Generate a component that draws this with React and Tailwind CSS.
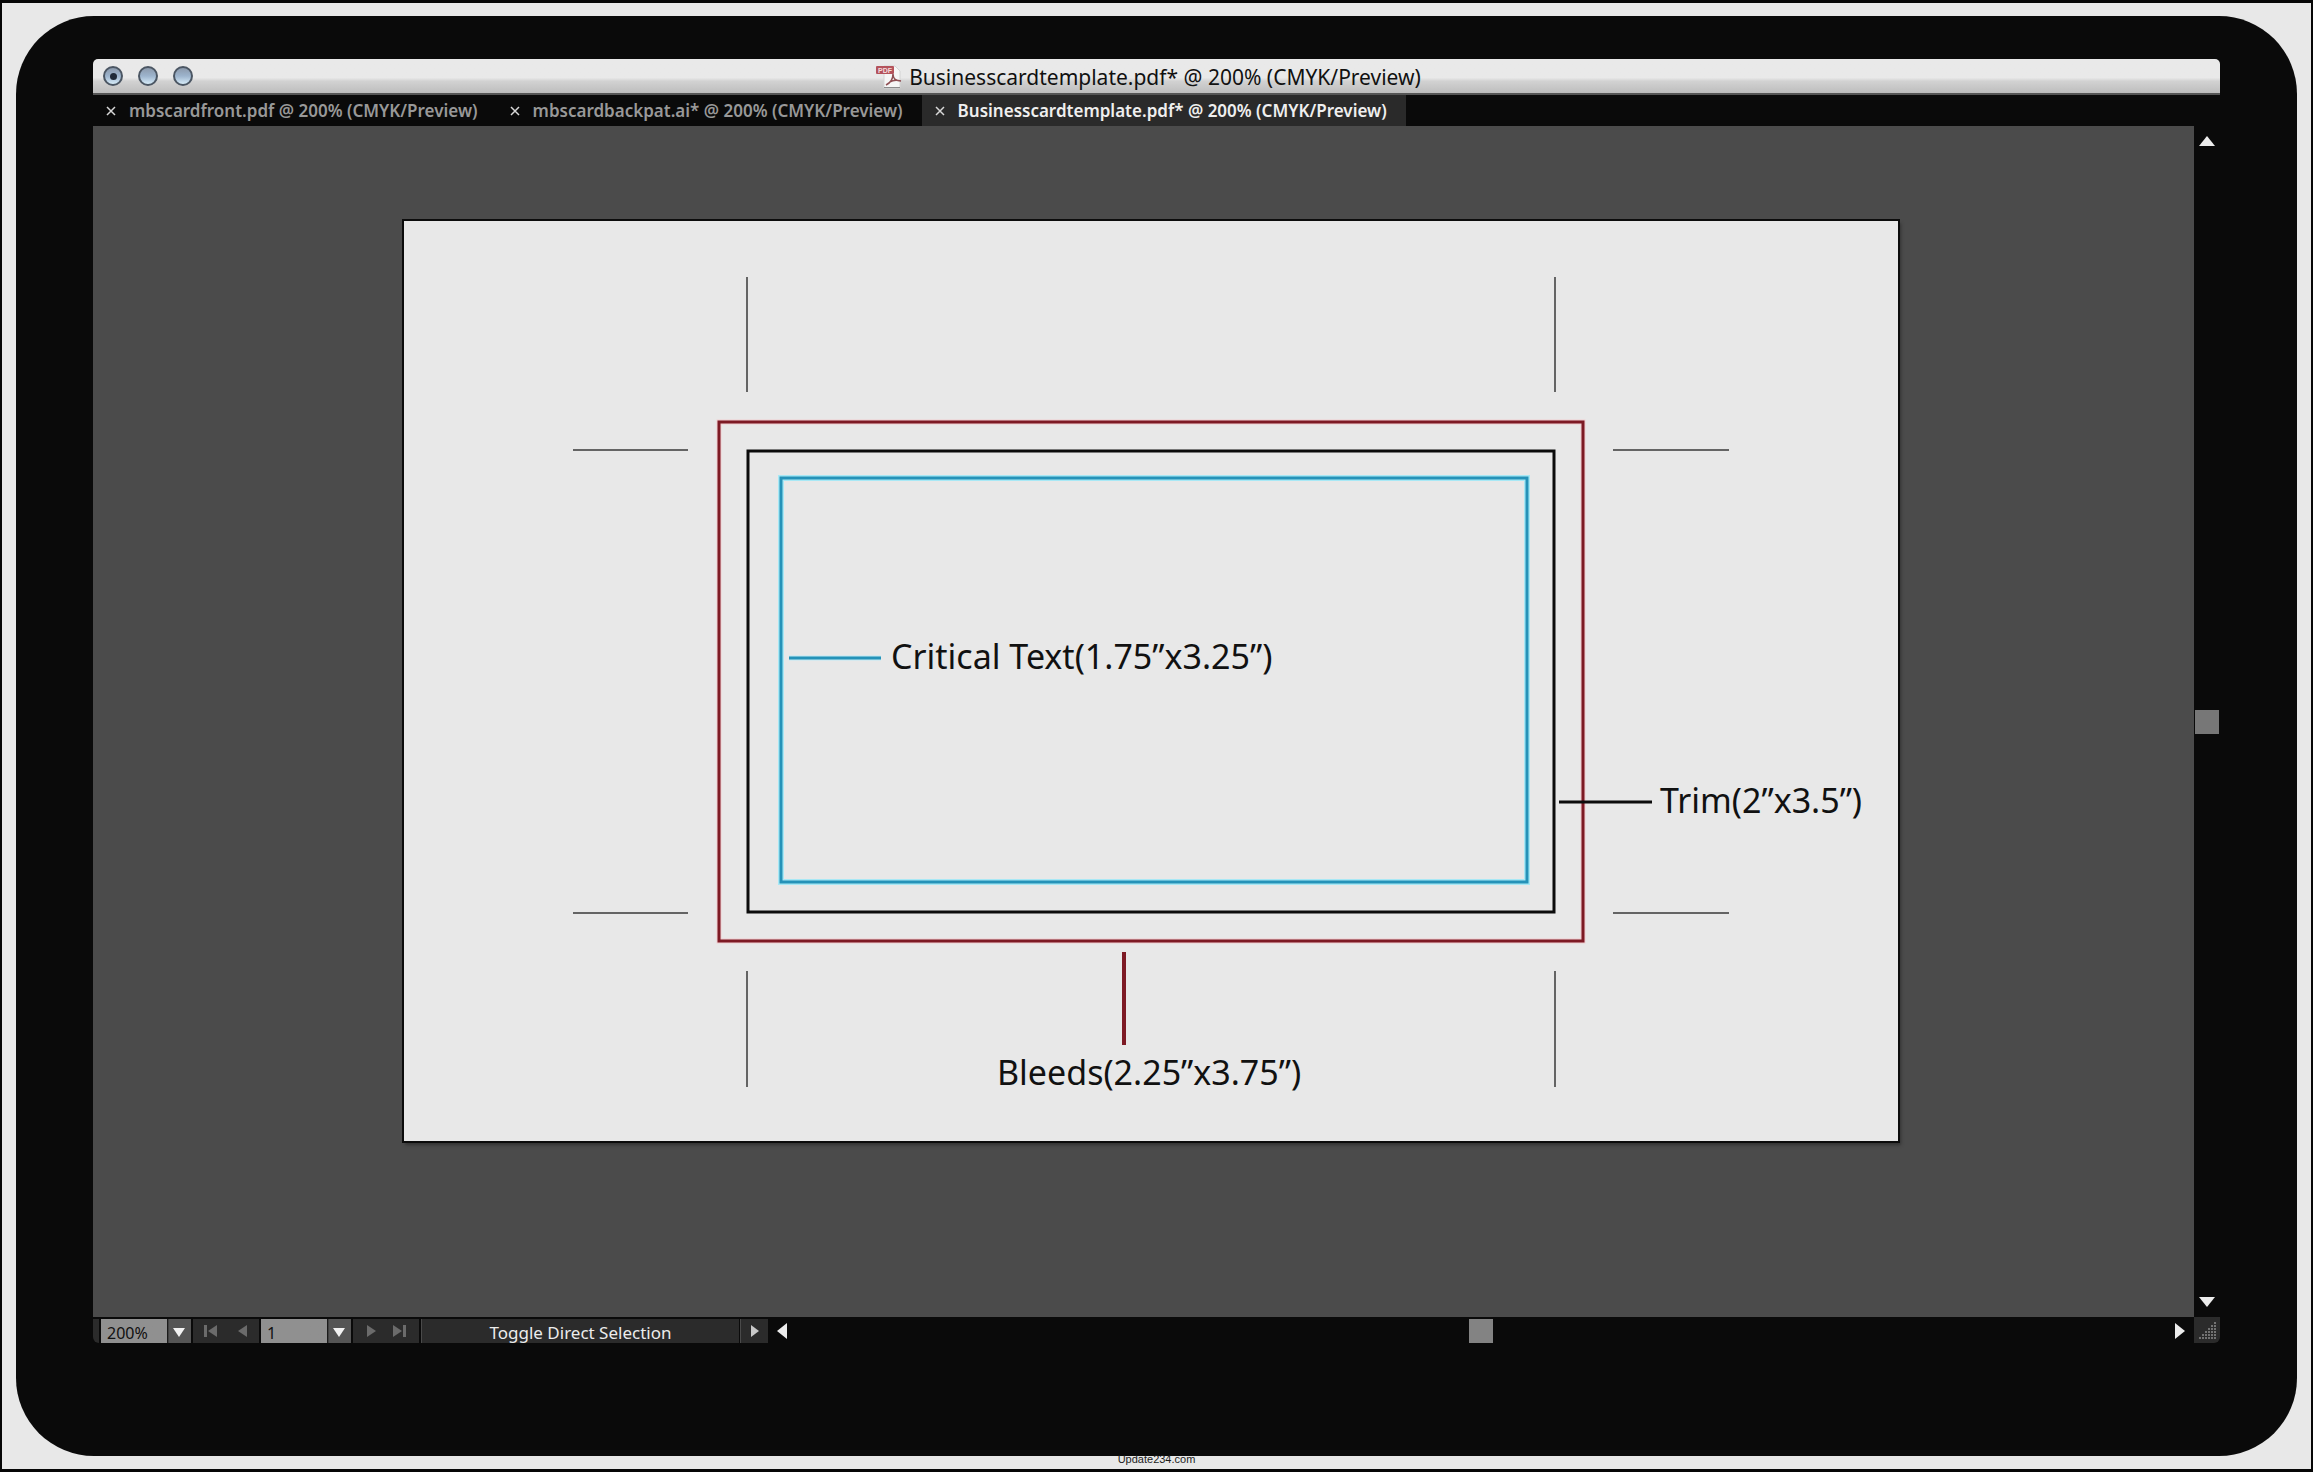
import React, { useState } from "react";

//tabs of the document window
const documents = [
  { id: "front", name: "mbscardfront.pdf @ 200% (CMYK/Preview)" },
  { id: "back", name: "mbscardbackpat.ai* @ 200% (CMYK/Preview)" },
  { id: "template", name: "Businesscardtemplate.pdf* @ 200% (CMYK/Preview)" },
];

//icons
const PdfIcon = () => (
  <svg width="26" height="24" viewBox="0 0 26 24" aria-hidden="true">
    <path d="M8 1h11l5 5v17H8z" fill="#f6f6f6" stroke="#d4d4d4" />
    <path d="M8 22.5h16" stroke="#8b8b8b" />
    <path d="M10 20c4-2 7-5 7-11c0 4 2 7 8 7M14 17c3-2 7-2 11-1" fill="none" stroke="#8f5054" strokeWidth="1.5" />
    <rect x="0" y="1" width="18" height="8" rx="1" fill="#b4535c" />
    <text x="9" y="8" fontSize="7" fontWeight="700" textAnchor="middle" fill="#f3dcdc" fontFamily="Liberation Sans, sans-serif">PDF</text>
  </svg>
);

const CloseIcon = () => (
  <svg width="10" height="10" viewBox="0 0 10 10" aria-hidden="true">
    <path d="M1 1l8 8M9 1l-8 8" stroke="#d8d8d8" strokeWidth="1.5" fill="none" />
  </svg>
);

const TriangleUp = () => (
  <svg width="16" height="10" viewBox="0 0 16 10" aria-hidden="true"><path d="M8 0l8 10H0z" fill="#ececec" /></svg>
);

const TriangleDown = () => (
  <svg width="16" height="10" viewBox="0 0 16 10" aria-hidden="true"><path d="M0 0h16l-8 10z" fill="#ececec" /></svg>
);

const TriangleLeft = () => (
  <svg width="10" height="16" viewBox="0 0 10 16" aria-hidden="true"><path d="M10 0v16L0 8z" fill="#ececec" /></svg>
);

const TriangleRight = () => (
  <svg width="10" height="16" viewBox="0 0 10 16" aria-hidden="true"><path d="M0 0v16l10-8z" fill="#ececec" /></svg>
);

const SkipIcon = ({ bar, flip }) => (
  <svg width="14" height="12" viewBox="0 0 14 12" fill="#6b6b6b" className={flip ? "-scale-x-100" : ""} aria-hidden="true">
    {bar && <path d="M0 0h3v12H0z" />}
    <path d="M13 0v12L4 6z" />
  </svg>
);

const GripIcon = () => {
  let dots = [];
  for (let row = 0; row < 6; row++) {
    for (let col = 5 - row; col < 6; col++) {
      dots.push(<rect key={row + "-" + col} x={col * 3} y={row * 3} width="2" height="2" />);
    }
  }
  return <svg width="17" height="17" viewBox="0 0 17 17" fill="#727272" aria-hidden="true">{dots}</svg>;
};

const TitleBar = ({ title }) => {
  return (
    <header className="grid h-9 grid-cols-[1fr_auto_1fr] items-center rounded-t-[5px] border-b-2 border-[#555555] bg-linear-to-b from-[#e9e9e9] from-55% via-[#d2d2d2] via-65% to-[#bdbdbd] px-[10px]">
      <div className="flex gap-[15px]">
        {["Close", "Minimize", "Zoom"].map((label, index) => (
          <button key={label} aria-label={label} className="flex size-5 items-center justify-center rounded-full border-2 border-[#4b5663] bg-linear-to-b from-[#8c9aac] via-[#9db4cd] to-[#d6ebf8]">
            {index === 0 && <span className="size-[7px] rounded-full bg-[#202a38]"></span>}
          </button>
        ))}
      </div>
      <h1 className="flex items-center gap-[7px] pt-px pr-4 text-[21px] leading-6 whitespace-nowrap text-[#111111]">
        <PdfIcon />
        {title}
      </h1>
    </header>
  );
};

const TabBar = ({ current, onSelect }) => {
  return (
    <nav className="flex h-[31px] bg-[#0a0a0a]" aria-label="Open documents">
      {documents.map((item) => (
        <div key={item.id} className={`flex items-center gap-[13px] pr-[19px] pl-[13px] ${current === item.id ? "bg-[#2a2a2a] text-[#efefef]" : "text-[#989898]"}`}>
          <button aria-label={"Close " + item.name}><CloseIcon /></button>
          <button className="text-[17px] leading-6 font-semibold whitespace-nowrap" onClick={() => onSelect(item.id)}>{item.name}</button>
        </div>
      ))}
    </nav>
  );
};

//business card template with bleed, trim and safe area
const Artboard = () => {
  return (
    <svg width="1496" height="922" viewBox="0 0 1496 922" className="shrink-0 bg-[#e8e8e8] shadow-[2px_3px_3px_#333333] outline-2 -outline-offset-1 outline-[#0c0c0c]" role="img" aria-label="Business card template">
      {/* crop marks */}
      <path d="M344 57v115M1152 57v115M344 751v116M1152 751v116M170 230h115M1210 230h116M170 693h115M1210 693h116" stroke="#383838" strokeWidth="1.5" />

      <rect x="316" y="202" width="864" height="519" fill="none" stroke="#f0cdd0" strokeWidth="5" />
      <rect x="316" y="202" width="864" height="519" fill="none" stroke="#7d1a24" strokeWidth="3" />
      <rect x="345" y="231" width="806" height="461" fill="none" stroke="#0b0b0b" strokeWidth="3" />
      <rect x="378" y="258" width="746" height="404" fill="none" stroke="#a8e8f5" strokeWidth="6" />
      <rect x="378" y="258" width="746" height="404" fill="none" stroke="#2592b8" strokeWidth="3" />

      {/* leaders */}
      <path d="M386 438h92" stroke="#bfeaf5" strokeWidth="5" />
      <path d="M386 438h92" stroke="#2592b8" strokeWidth="3" />
      <path d="M1156 582h93" stroke="#0b0b0b" strokeWidth="3" />
      <path d="M721 732v93" stroke="#7d1a24" strokeWidth="4" />

      <g fontFamily="Noto Sans, sans-serif" fontSize="34" fill="#111111">
        <text x="488" y="449">Critical Text(1.75”x3.25”)</text>
        <text x="1257" y="593">Trim(2”x3.5”)</text>
        <text x="594" y="865">Bleeds(2.25”x3.75”)</text>
      </g>
    </svg>
  );
};

const StatusSelect = ({ label, options }) => {
  return (
    <div className="relative flex border-x-2 border-[#0a0a0a]">
      <select aria-label={label} className="w-[90px] appearance-none bg-linear-to-r from-[#909090] from-[66px] via-[#0a0a0a] via-[66px] to-[#555555] to-[68px] pt-[3px] pl-[6px] text-[16px] leading-5 text-[#111111]">
        {options.map((option) => <option key={option}>{option}</option>)}
      </select>
      <span className="pointer-events-none absolute top-[9px] right-[6px]">
        <svg width="12" height="9" viewBox="0 0 12 9" aria-hidden="true"><path d="M0 0h12L6 9z" fill="#f2f2f2" /></svg>
      </span>
    </div>
  );
};

const StatusBar = () => {
  return (
    <footer className="flex h-[26px] bg-[#0a0a0a] pt-[2px]">
      <div className="w-[6px] rounded-bl-[6px] bg-[#2b2b2b]"></div>
      <StatusSelect label="Zoom level" options={["200%", "100%", "50%"]} />
      <div className="flex w-[66px] items-center justify-center gap-4 bg-[#2b2b2b]">
        <button aria-label="First artboard"><SkipIcon bar /></button>
        <button aria-label="Previous artboard"><SkipIcon /></button>
      </div>
      <StatusSelect label="Artboard" options={["1"]} />
      <div className="flex w-[66px] items-center justify-center gap-3 bg-[#2b2b2b]">
        <button aria-label="Next artboard"><SkipIcon flip /></button>
        <button aria-label="Last artboard"><SkipIcon bar flip /></button>
      </div>
      <div className="ml-[2px] w-[318px] border-l border-[#4a4a4a] bg-[#2b2b2b] pt-[2px] text-center text-[17px] leading-6 text-[#ececec]">Toggle Direct Selection</div>
      <button aria-label="Status options" className="ml-px flex w-[28px] items-center justify-center border-l border-[#4a4a4a] bg-[#2b2b2b]">
        <svg width="8" height="12" viewBox="0 0 8 12" aria-hidden="true"><path d="M0 0v12l8-6z" fill="#c8c8c8" /></svg>
      </button>
      {/* horizontal scroll */}
      <div className="flex flex-1 items-center justify-between px-[9px]">
        <button aria-label="Scroll left"><TriangleLeft /></button>
        <div className="size-6 bg-[#838383]"></div>
        <button aria-label="Scroll right"><TriangleRight /></button>
      </div>
    </footer>
  );
};

const App = () => {
  let [current, setCurrent] = useState("template");
  let title = documents.find((item) => item.id === current).name;

  return (
    <div className="flex min-h-screen flex-col bg-[#060606] px-[2px] py-[3px] font-['Noto_Sans',sans-serif]">
      <div className="flex flex-1 flex-col bg-[#e8e8e8] px-[14px] pt-[13px]">
        <main className="flex flex-1 flex-col rounded-[78px] bg-[#0a0a0a] px-[77px] pt-[43px] pb-[113px]">
          <TitleBar title={title} />
          <TabBar current={current} onSelect={setCurrent} />
          <div className="grid flex-1 grid-cols-[1fr_26px] grid-rows-[1fr_26px]">
            <section className="overflow-hidden bg-[#4b4b4b] pt-[94px] pl-[310px]">
              <Artboard />
            </section>

            {/* vertical scroll */}
            <div className="flex flex-col items-center justify-between bg-[#0a0a0a] py-[10px]">
              <button aria-label="Scroll up" className="flex"><TriangleUp /></button>
              <div className="size-6 bg-[#777777]"></div>
              <button aria-label="Scroll down" className="flex"><TriangleDown /></button>
            </div>

            <StatusBar />
            <div className="flex items-center justify-center rounded-br-[6px] bg-[#2b2b2b]">
              <GripIcon />
            </div>
          </div>
        </main>
        <p className="h-[13px] text-center font-['Liberation_Sans',sans-serif] text-[11px] leading-[6px] text-[#1c1c1c]">Update234.com</p>
      </div>
    </div>
  );
};

export default App;
